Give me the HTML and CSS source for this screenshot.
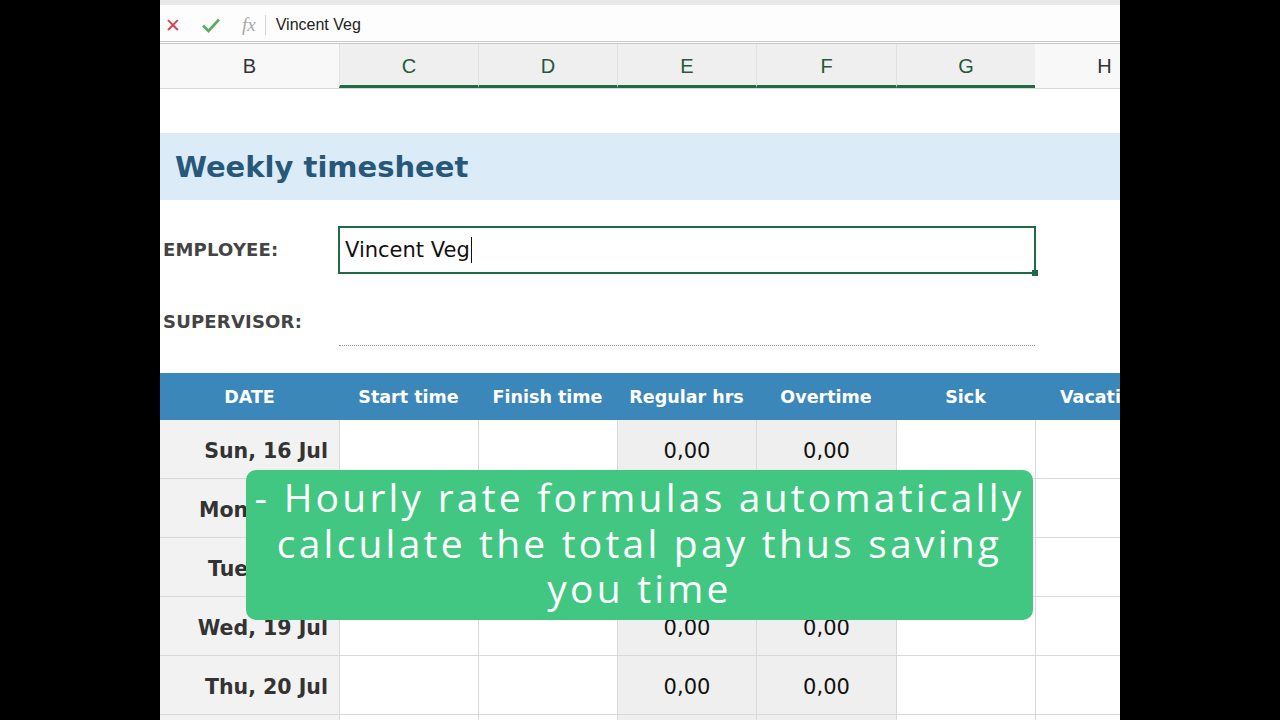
FILE: index.html
```html
<!DOCTYPE html>
<html lang="en">
<head>
    <meta charset="UTF-8">
    <title>Weekly timesheet</title>
    <link rel="stylesheet" href="styles.css">
</head>
<body>
    <div class="frame">
        <!-- formula bar -->
        <div class="formula-bar">
            <span class="fb-cancel">&#x2715;</span>
            <svg class="fb-ok" width="20" height="16" viewBox="0 0 20 16"><path d="M2 8.5 L7.5 14 L18 2.5" fill="none" stroke="#5aad5f" stroke-width="2.6"/></svg>
            <span class="fb-fx">fx</span>
            <span class="fb-sep"></span>
            <span class="fb-text">Vincent Veg</span>
        </div>

        <!-- column letters -->
        <div class="cols col-head">
            <div>B</div>
            <div class="sel">C</div>
            <div class="sel">D</div>
            <div class="sel">E</div>
            <div class="sel">F</div>
            <div class="sel">G</div>
            <div>H</div>
        </div>

        <div class="gap-row"></div>

        <div class="title-band">Weekly timesheet</div>

        <div class="cols info-row employee">
            <div class="label">EMPLOYEE:</div>
            <div class="entry"><span>Vincent Veg</span><i class="caret"></i><b class="handle"></b></div>
        </div>

        <div class="cols info-row supervisor">
            <div class="label">SUPERVISOR:</div>
            <div class="entry dotted"></div>
        </div>

        <div class="cols table-head">
            <div>DATE</div>
            <div>Start time</div>
            <div>Finish time</div>
            <div>Regular hrs</div>
            <div>Overtime</div>
            <div>Sick</div>
            <div>Vacation</div>
        </div>

        <div class="cols day">
            <div class="d">Sun, 16 Jul</div><div></div><div></div><div class="g">0,00</div><div class="g">0,00</div><div></div><div></div>
        </div>
        <div class="cols day">
            <div class="d">Mon, 17 Jul</div><div></div><div></div><div class="g">0,00</div><div class="g">0,00</div><div></div><div></div>
        </div>
        <div class="cols day">
            <div class="d">Tue, 18 Jul</div><div></div><div></div><div class="g">0,00</div><div class="g">0,00</div><div></div><div></div>
        </div>
        <div class="cols day">
            <div class="d">Wed, 19 Jul</div><div></div><div></div><div class="g">0,00</div><div class="g">0,00</div><div></div><div></div>
        </div>
        <div class="cols day">
            <div class="d">Thu, 20 Jul</div><div></div><div></div><div class="g">0,00</div><div class="g">0,00</div><div></div><div></div>
        </div>
        <div class="cols day">
            <div class="d"></div><div></div><div></div><div class="g"></div><div class="g"></div><div></div><div></div>
        </div>

        <div class="caption">- Hourly rate formulas automatically<br>calculate the total pay thus saving<br>you time</div>
    </div>
</body>
</html>
```

FILE: styles.css
```css
* {
    box-sizing: border-box;
}

body {
    margin: 0;
    background: #000;
    height: 720px;
    overflow: hidden;
}

.frame {
    position: relative;
    width: 960px;
    height: 720px;
    margin: 0 auto;
    background: #fff;
    overflow: hidden;
    font-family: "DejaVu Sans", Verdana, sans-serif;
}

/* formula bar */
.formula-bar {
    height: 44px;
    display: flex;
    align-items: center;
    padding-top: 3px;
    border-top: 5px solid #e9e9e9;
    border-bottom: 3px double #c8c8c8;
    background: #fdfdfd;
    font-family: "Liberation Sans", Arial, sans-serif;
}
.fb-cancel {
    color: #d0454f;
    font-size: 19px;
    margin-left: 5px;
    width: 36px;
    font-family: "DejaVu Sans", sans-serif;
}
.fb-ok {
    margin-left: 0;
}
.fb-fx {
    font-family: "Liberation Serif", serif;
    font-style: italic;
    color: #a8a8a8;
    font-size: 19px;
    margin-left: 21px;
}
.fb-sep {
    width: 1px;
    height: 20px;
    background: #d4d4d4;
    margin-left: 9px;
}
.fb-text {
    margin-left: 10px;
    font-size: 16px;
    color: #222;
}

/* shared column grid */
.cols {
    display: grid;
    grid-template-columns: 179px 139px 139px 139px 140px 139px 139px;
    width: 1014px;
}

.col-head {
    height: 45px;
    font-family: "Liberation Sans", Arial, sans-serif;
    font-size: 20px;
    color: #333;
    border-bottom: 1px solid #d8d8d8;
}
.col-head div {
    display: flex;
    align-items: center;
    justify-content: center;
    background: #f8f8f8;
}
.col-head .sel {
    background: #efefef;
    color: #1f5a3a;
    border-left: 1px solid #e0e0e0;
    border-bottom: 3px solid #1e6b45;
    padding-top: 3px;
}

.gap-row {
    height: 44px;
}

.title-band {
    height: 67px;
    background: #dbebf7;
    color: #27587a;
    font-weight: bold;
    font-size: 29px;
    padding-left: 15px;
    display: flex;
    align-items: center;
}

.info-row {
    align-items: start;
}
.info-row.employee {
    height: 87px;
    padding-top: 26px;
}
.info-row.employee .label {
    line-height: 48px;
}
.info-row.supervisor {
    height: 86px;
    padding-top: 23px;
}
.info-row.supervisor .label {
    line-height: 24px;
}
.label {
    font-weight: bold;
    font-size: 18px;
    color: #444;
    padding-left: 3px;
    letter-spacing: 0.2px;
}
.entry {
    grid-column: 2 / 7;
    position: relative;
    height: 48px;
    margin-left: -1px;
    margin-right: -1px;
    border: 2px solid #1e6b45;
    display: flex;
    align-items: center;
    padding-left: 5px;
    font-size: 21px;
    color: #111;
}
.caret {
    width: 1px;
    height: 26px;
    background: #111;
    margin-left: 1px;
}
.handle {
    position: absolute;
    right: -4px;
    bottom: -4px;
    width: 6px;
    height: 6px;
    background: #1e6b45;
}
.entry.dotted {
    border: none;
    height: 1px;
    margin: 35px 0 0 0;
    border-top: 1px dotted #9a9a9a;
}

.table-head {
    height: 47px;
    background: #3c87ba;
    color: #fff;
    font-weight: bold;
    font-size: 17.5px;
}
.table-head div {
    display: flex;
    align-items: center;
    justify-content: center;
    white-space: nowrap;
}
.table-head div:last-child {
    justify-content: flex-start;
    padding-left: 25px;
}

.day {
    height: 59px;
    border-bottom: 1px solid #d9d9d9;
}
.day div {
    border-left: 1px solid #d9d9d9;
    display: flex;
    align-items: center;
    justify-content: center;
    padding-top: 3px;
    font-size: 21px;
    color: #111;
}
.day .d {
    border-left: none;
    justify-content: flex-end;
    padding-right: 11px;
    background: #f2f2f2;
    font-weight: bold;
    font-size: 20.5px;
    color: #333;
}
.day .g {
    background: #efefef;
}

/* subtitle overlay */
.caption {
    position: absolute;
    left: 86px;
    top: 470px;
    width: 787px;
    height: 150px;
    background: #41c781;
    border-radius: 10px;
    color: #fff;
    font-family: "Open Sans", sans-serif;
    font-size: 39px;
    line-height: 45.5px;
    letter-spacing: 3.2px;
    text-align: center;
    padding: 4px 0 0;
    white-space: nowrap;
}
```
